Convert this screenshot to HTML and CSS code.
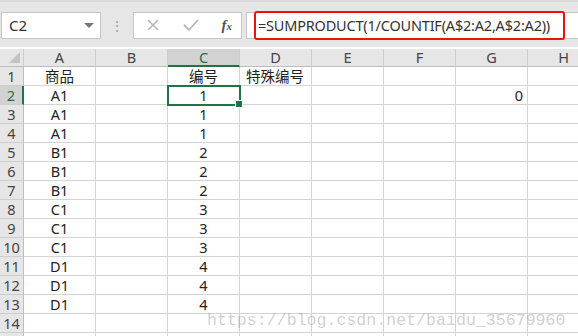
FILE: index.html
```html
<!DOCTYPE html>
<html lang="zh-CN">
<head>
    <meta charset="UTF-8">
    <title>SUMPRODUCT</title>
    <link rel="stylesheet" href="styles.css">
</head>
<body>
    <div class="toolbar">
        <div class="namebox">
            <span>C2</span>
            <span class="caret"></span>
        </div>
        <div class="grip">&#8942;</div>
        <div class="funcbox">
            <svg width="14" height="14" viewBox="0 0 14 14"><path d="M2 2 L12 12 M12 2 L2 12" stroke="#b8b8b8" stroke-width="1.6" fill="none"/></svg>
            <svg width="16" height="14" viewBox="0 0 16 14"><path d="M1 7 L6 12 L15 2" stroke="#b8b8b8" stroke-width="1.8" fill="none"/></svg>
            <span class="fx"><i>f</i><small>x</small></span>
        </div>
        <div class="formulabar">
            <div class="formula">=SUMPRODUCT(1/COUNTIF(A$2:A2,A$2:A2))</div>
        </div>
    </div>

    <div class="sheet">
        <div class="hd corner"></div>
        <div class="hd">A</div><div class="hd">B</div><div class="hd sel-col">C</div><div class="hd">D</div>
        <div class="hd">E</div><div class="hd">F</div><div class="hd">G</div><div class="hd">H</div>

        <div class="rh">1</div><div class="c">商品</div><div class="c"></div><div class="c">编号</div><div class="c left">特殊编号</div><div class="c"></div><div class="c"></div><div class="c"></div><div class="c"></div>
        <div class="rh sel-row">2</div><div class="c">A1</div><div class="c"></div><div class="c active">1<span class="handle"></span></div><div class="c"></div><div class="c"></div><div class="c"></div><div class="c right">0</div><div class="c"></div>
        <div class="rh">3</div><div class="c">A1</div><div class="c"></div><div class="c">1</div><div class="c"></div><div class="c"></div><div class="c"></div><div class="c"></div><div class="c"></div>
        <div class="rh">4</div><div class="c">A1</div><div class="c"></div><div class="c">1</div><div class="c"></div><div class="c"></div><div class="c"></div><div class="c"></div><div class="c"></div>
        <div class="rh">5</div><div class="c">B1</div><div class="c"></div><div class="c">2</div><div class="c"></div><div class="c"></div><div class="c"></div><div class="c"></div><div class="c"></div>
        <div class="rh">6</div><div class="c">B1</div><div class="c"></div><div class="c">2</div><div class="c"></div><div class="c"></div><div class="c"></div><div class="c"></div><div class="c"></div>
        <div class="rh">7</div><div class="c">B1</div><div class="c"></div><div class="c">2</div><div class="c"></div><div class="c"></div><div class="c"></div><div class="c"></div><div class="c"></div>
        <div class="rh">8</div><div class="c">C1</div><div class="c"></div><div class="c">3</div><div class="c"></div><div class="c"></div><div class="c"></div><div class="c"></div><div class="c"></div>
        <div class="rh">9</div><div class="c">C1</div><div class="c"></div><div class="c">3</div><div class="c"></div><div class="c"></div><div class="c"></div><div class="c"></div><div class="c"></div>
        <div class="rh">10</div><div class="c">C1</div><div class="c"></div><div class="c">3</div><div class="c"></div><div class="c"></div><div class="c"></div><div class="c"></div><div class="c"></div>
        <div class="rh">11</div><div class="c">D1</div><div class="c"></div><div class="c">4</div><div class="c"></div><div class="c"></div><div class="c"></div><div class="c"></div><div class="c"></div>
        <div class="rh">12</div><div class="c">D1</div><div class="c"></div><div class="c">4</div><div class="c"></div><div class="c"></div><div class="c"></div><div class="c"></div><div class="c"></div>
        <div class="rh">13</div><div class="c">D1</div><div class="c"></div><div class="c">4</div><div class="c"></div><div class="c"></div><div class="c"></div><div class="c"></div><div class="c"></div>
        <div class="rh">14</div><div class="c"></div><div class="c"></div><div class="c"></div><div class="c"></div><div class="c"></div><div class="c"></div><div class="c"></div><div class="c"></div>
        <div class="rh"></div><div class="c"></div><div class="c"></div><div class="c"></div><div class="c"></div><div class="c"></div><div class="c"></div><div class="c"></div><div class="c"></div>

        <div class="watermark">https://blog.csdn.net/baidu_35679960</div>
    </div>
</body>
</html>
```

FILE: styles.css
```css
body {
    margin: 0;
    width: 578px;
    height: 336px;
    overflow: hidden;
    background: #fff;
    font-family: "Noto Sans", "Noto Sans CJK SC", sans-serif;
    color: #222;
}
.toolbar {
    height: 47px;
    background: #e6e6e6;
    border-top: 2px solid #d9d9d9;
    box-sizing: border-box;
    display: flex;
    align-items: center;
    padding-top: 1px;
}
.namebox {
    width: 100px;
    height: 27px;
    margin-left: 1px;
    background: #fff;
    border: 1px solid #c6c6c6;
    box-sizing: border-box;
    display: flex;
    align-items: center;
    justify-content: space-between;
    padding: 0 6px 0 7px;
    font-size: 15px;
    color: #333;
}
.caret {
    width: 0;
    height: 0;
    border-left: 5px solid transparent;
    border-right: 5px solid transparent;
    border-top: 5px solid #777;
}
.grip {
    width: 32px;
    text-align: center;
    color: #a0a0a0;
    font-size: 14px;
}
.funcbox {
    width: 109px;
    height: 27px;
    background: #fff;
    border: 1px solid #c6c6c6;
    box-sizing: border-box;
    display: flex;
    align-items: center;
    justify-content: space-between;
    padding: 0 9px 0 12px;
}
.fx {
    font-family: "Liberation Serif", serif;
    font-size: 15px;
    color: #555;
    font-weight: bold;
}
.fx small {
    font-size: 11px;
    font-style: italic;
}
.formulabar {
    flex: 1;
    height: 27px;
    margin-left: 4px;
    background: #fff;
    border: 1px solid #c6c6c6;
    border-right: none;
    box-sizing: border-box;
    display: flex;
    align-items: center;
    padding-left: 7px;
}
.formula {
    width: 311px;
    height: 29px;
    border: 2.5px solid #f01010;
    border-radius: 3px;
    box-sizing: border-box;
    display: flex;
    align-items: center;
    padding-left: 2px;
    font-size: 14.5px;
    color: #333;
    letter-spacing: -0.2px;
}
.sheet {
    position: relative;
    margin-top: 2px;
    display: grid;
    grid-template-columns: 24px repeat(8, 72px);
    grid-template-rows: 18px;
    grid-auto-rows: 19px;
    font-size: 14.5px;
}
.hd, .rh, .c {
    box-sizing: border-box;
    border-right: 1px solid #d4d4d4;
    border-bottom: 1px solid #d4d4d4;
    display: flex;
    align-items: center;
    justify-content: center;
    line-height: 1;
    white-space: nowrap;
}
.hd {
    background: #e6e6e6;
    color: #444;
    border-right-color: #cdcdcd;
    border-bottom-color: #bdbdbd;
}
.rh {
    background: #e6e6e6;
    color: #444;
    border-right-color: #bdbdbd;
    border-bottom-color: #cdcdcd;
}
.corner {
    position: relative;
}
.corner::after {
    content: "";
    position: absolute;
    right: 3px;
    bottom: 3px;
    border-left: 11px solid transparent;
    border-bottom: 11px solid #c3c3c3;
}
.sel-col {
    background: #d2d2d2;
    color: #217346;
    border-bottom: 2px solid #217346;
}
.sel-row {
    background: #d2d2d2;
    color: #217346;
    border-right: 2px solid #217346;
}
.left {
    justify-content: flex-start;
    padding-left: 6px;
}
.right {
    justify-content: flex-end;
    padding-right: 4px;
}
.active {
    position: relative;
    outline: 2px solid #217346;
    outline-offset: -1px;
}
.handle {
    position: absolute;
    right: -4px;
    bottom: -4px;
    width: 6px;
    height: 6px;
    background: #217346;
    border: 1px solid #fff;
}
.watermark {
    position: absolute;
    left: 207px;
    top: 262px;
    font-family: "Liberation Mono", monospace;
    font-size: 16.6px;
    color: rgba(150, 150, 150, 0.45);
}
```
